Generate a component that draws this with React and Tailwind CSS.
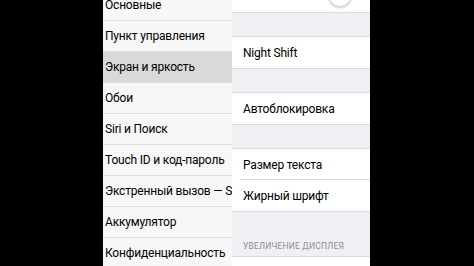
import React from "react";

const sideItems = [
  "Основные",
  "Пункт управления",
  "Экран и яркость",
  "Обои",
  "Siri и Поиск",
  "Touch ID и код-пароль",
  "Экстренный вызов — SOS",
  "Аккумулятор",
  "Конфиденциальность",
];

const Gap = ({ h }) => (
  <div className={`${h} shrink-0 bg-[#efeff4] border-y border-[#dcdce0]`} />
);

const Row = ({ label, inset }) => (
  <div className="h-[31px] shrink-0 bg-white flex items-center pl-[11px] relative">
    <span className="text-[12px] leading-none tracking-[-0.2px] text-black whitespace-nowrap">
      {label}
    </span>
    {inset && (
      <div className="absolute bottom-0 left-[8px] right-0 h-px bg-[#dcdce0]" />
    )}
  </div>
);

export default function App() {
  return (
    <div
      className="w-[474px] h-[266px] bg-black flex overflow-hidden"
      style={{ fontFamily: "Roboto, 'Noto Sans', sans-serif" }}
    >
      <div className="w-[103px] shrink-0" />

      {/* Sidebar */}
      <div className="w-[129px] shrink-0 bg-[#f7f7f7] overflow-hidden">
        <div className="-mt-[10px]">
          {sideItems.map((item, i) => (
            <div
              key={item}
              className={`h-[31px] flex items-center pl-[2px] border-b border-[#dedede] ${
                i === 2 ? "bg-[#d9d9d9]" : ""
              }`}
            >
              <span className="text-[12px] leading-none tracking-[-0.2px] text-black whitespace-nowrap">
                {item}
              </span>
            </div>
          ))}
        </div>
      </div>

      {/* Detail panel */}
      <div className="w-[138px] shrink-0 bg-[#efeff4] flex flex-col overflow-hidden">
        <div className="h-[12px] bg-white relative shrink-0">
          <div className="absolute left-[96px] -top-[17px] w-[24px] h-[24px] rounded-full bg-white border border-[#d6d6d6] shadow-[0_1px_2px_rgba(0,0,0,0.2)]" />
        </div>
        <Gap h="h-[25px]" />
        <Row label="Night Shift" />
        <Gap h="h-[25px]" />
        <Row label="Автоблокировка" />
        <Gap h="h-[25px]" />
        <Row label="Размер текста" inset />
        <Row label="Жирный шрифт" />
        <div className="h-[45px] bg-[#efeff4] border-t border-[#dcdce0] flex items-end pl-[11px] pb-[6px] shrink-0">
          <span className="text-[8.5px] leading-none text-[#8e8e93] tracking-[0.2px] whitespace-nowrap">
            УВЕЛИЧЕНИЕ ДИСПЛЕЯ
          </span>
        </div>
        <div className="flex-1 bg-white border-t border-[#dcdce0]" />
      </div>

      <div className="flex-1" />
    </div>
  );
}
